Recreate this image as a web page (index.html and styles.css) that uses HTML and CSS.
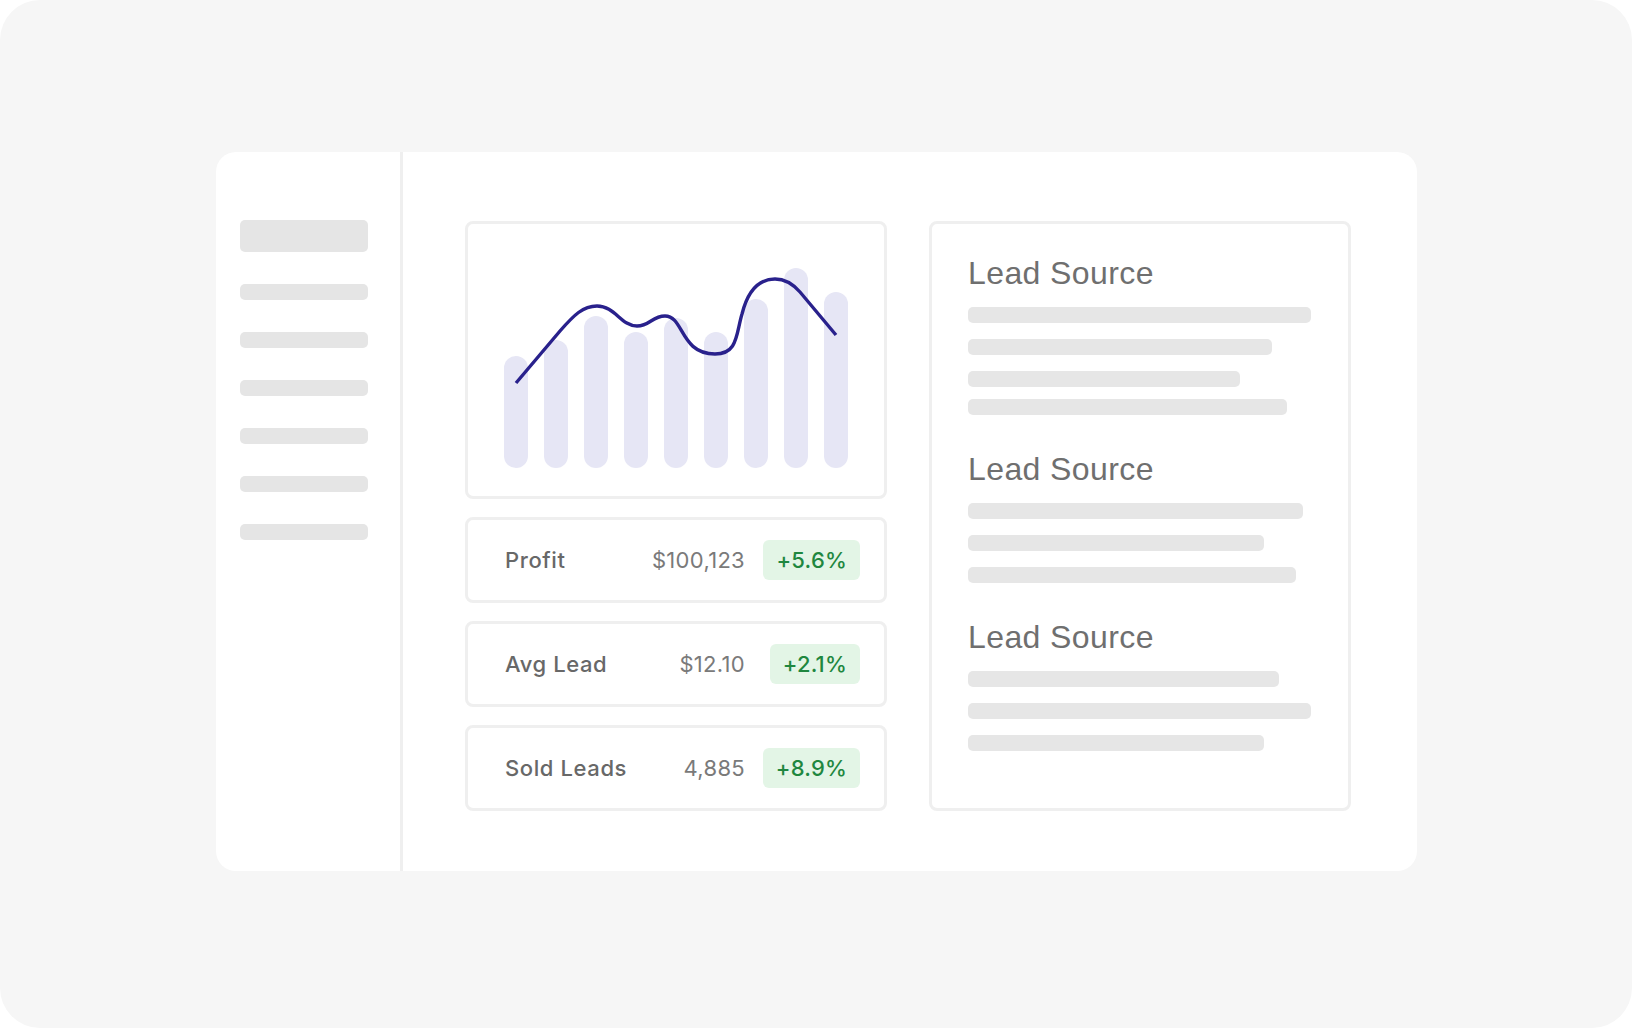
FILE: index.html
```html
<!DOCTYPE html>
<html lang="en">
<head>
<meta charset="utf-8">
<title>Leads dashboard</title>
<link rel="stylesheet" href="styles.css">
</head>
<body>
<div class="frame">
  <div class="app">
    <aside class="sidebar">
      <div class="sk sk-head"></div>
      <div class="sk sk-item"></div>
      <div class="sk sk-item"></div>
      <div class="sk sk-item"></div>
      <div class="sk sk-item"></div>
      <div class="sk sk-item"></div>
      <div class="sk sk-item"></div>
    </aside>
    <main class="content">
      <div class="col-left">
        <section class="card chart-card">
          <svg class="chart" width="416" height="272" viewBox="0 0 416 272" xmlns="http://www.w3.org/2000/svg">
            <g fill="#e6e6f5">
              <rect x="36" y="132" width="24" height="112" rx="12"/>
              <rect x="76" y="116" width="24" height="128" rx="12"/>
              <rect x="116" y="92" width="24" height="152" rx="12"/>
              <rect x="156" y="108" width="24" height="136" rx="12"/>
              <rect x="196" y="94" width="24" height="150" rx="12"/>
              <rect x="236" y="108" width="24" height="136" rx="12"/>
              <rect x="276" y="75" width="24" height="169" rx="12"/>
              <rect x="316" y="44" width="24" height="200" rx="12"/>
              <rect x="356" y="68" width="24" height="176" rx="12"/>
            </g>
            <path d="M48 159 L92 107 C106 91 115 82 129 82 C147 82 153 102 169 102 C182 102 184 92 197 92 C216 92 212 130 247 130 C270 130 268 110 274 90 C280 66 292 55 307 55 C318 55 325 60 332 68 L368 111" fill="none" stroke="#29218c" stroke-width="3.4"/>
          </svg>
        </section>
        <div class="card stat">
          <span class="stat-label">Profit</span>
          <span class="stat-value">$100,123</span>
          <span class="badge">+5.6%</span>
        </div>
        <div class="card stat">
          <span class="stat-label">Avg Lead</span>
          <span class="stat-value">$12.10</span>
          <span class="badge">+2.1%</span>
        </div>
        <div class="card stat">
          <span class="stat-label">Sold Leads</span>
          <span class="stat-value">4,885</span>
          <span class="badge">+8.9%</span>
        </div>
      </div>
      <section class="card sources">
        <div class="source">
          <h3 class="source-title">Lead Source</h3>
          <div class="lines">
            <div class="line w343"></div>
            <div class="line w304"></div>
            <div class="line w272"></div>
            <div class="line w319 tight"></div>
          </div>
        </div>
        <div class="source">
          <h3 class="source-title">Lead Source</h3>
          <div class="lines">
            <div class="line w335"></div>
            <div class="line w296"></div>
            <div class="line w328"></div>
          </div>
        </div>
        <div class="source">
          <h3 class="source-title">Lead Source</h3>
          <div class="lines">
            <div class="line w311"></div>
            <div class="line w343"></div>
            <div class="line w296"></div>
          </div>
        </div>
      </section>
    </main>
  </div>
</div>
</body>
</html>
```

FILE: styles.css
```css
* { box-sizing: border-box; }

html, body {
  margin: 0;
  padding: 0;
  background: #ffffff;
}

.frame {
  width: 1632px;
  height: 1028px;
  background: #f6f6f6;
  border-radius: 40px;
  padding: 152px 0 0 216px;
  font-family: Inter, "Liberation Sans", sans-serif;
}

.app {
  width: 1201px;
  height: 719px;
  background: #ffffff;
  border-radius: 20px;
  display: flex;
}

.sidebar {
  width: 187px;
  flex: none;
  border-right: 3px solid #efefef;
  padding: 68px 0 0 24px;
  display: flex;
  flex-direction: column;
  gap: 32px;
}

.sk {
  width: 128px;
  background: #e5e5e5;
  border-radius: 5px;
}
.sk-head { height: 32px; }
.sk-item { height: 16px; }

.content {
  flex: 1;
  padding: 69px 0 0 62px;
  display: grid;
  grid-template-columns: 422px 422px;
  column-gap: 42px;
  align-items: start;
}

.col-left {
  display: flex;
  flex-direction: column;
  gap: 18px;
}

.card {
  background: #ffffff;
  border: 3px solid #efefef;
  border-radius: 8px;
}

.chart-card {
  height: 278px;
}
.chart { display: block; }

.stat {
  height: 86px;
  padding: 0 24px 0 37px;
  display: grid;
  grid-template-columns: 1fr auto 96px;
  column-gap: 19px;
  align-items: center;
}

.stat-label {
  font-size: 22px;
  font-weight: 500;
  color: #686868;
  letter-spacing: 0.6px;
}

.stat-value {
  font-size: 22px;
  font-weight: 400;
  color: #7a7a7a;
  letter-spacing: 0.3px;
}

.badge {
  justify-self: end;
  height: 40px;
  padding: 0 13px;
  display: flex;
  align-items: center;
  background: #e3f5e6;
  border-radius: 6px;
  color: #1f873f;
  font-size: 22px;
  font-weight: 500;
  letter-spacing: 0.2px;
}

.sources {
  height: 590px;
  padding: 31px 0 0 36px;
  display: flex;
  flex-direction: column;
  gap: 36px;
}

.source-title {
  margin: 0;
  font-family: "Liberation Sans", Arial, sans-serif;
  font-size: 32px;
  line-height: 36px;
  font-weight: 400;
  color: #6f6f6f;
  letter-spacing: 0.4px;
}

.lines {
  margin-top: 16px;
  display: flex;
  flex-direction: column;
  gap: 16px;
}

.line {
  height: 16px;
  background: #e6e6e6;
  border-radius: 5px;
}
.line.tight { margin-top: -4px; }

.w272 { width: 272px; }
.w296 { width: 296px; }
.w304 { width: 304px; }
.w311 { width: 311px; }
.w319 { width: 319px; }
.w328 { width: 328px; }
.w335 { width: 335px; }
.w343 { width: 343px; }
```
